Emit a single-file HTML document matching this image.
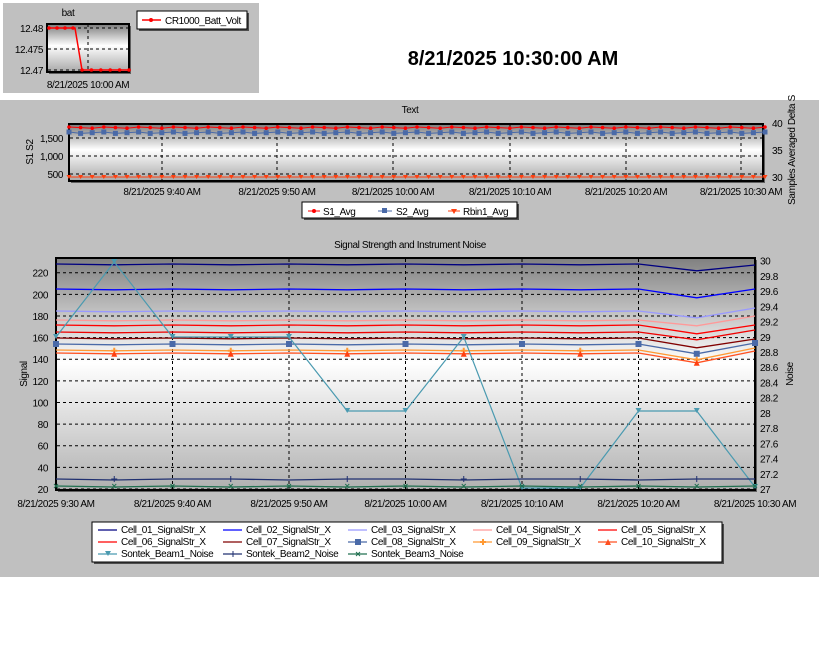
<!DOCTYPE html>
<html><head><meta charset="utf-8"><style>
html,body{margin:0;padding:0;background:#fff;width:821px;height:657px;overflow:hidden}
svg{display:block;font-family:"Liberation Sans",sans-serif}
svg text{letter-spacing:-0.4px}
svg text.big{letter-spacing:0}
</style></head><body>
<svg id="s" width="821" height="657" xmlns="http://www.w3.org/2000/svg">
<defs>
<linearGradient id="g1" x1="0" y1="0" x2="0" y2="1">
<stop offset="0" stop-color="#7a7a7a"/><stop offset="0.45" stop-color="#ffffff"/><stop offset="1" stop-color="#a8a8a8"/></linearGradient>
<linearGradient id="g2" x1="0" y1="0" x2="0" y2="1">
<stop offset="0" stop-color="#808080"/><stop offset="0.45" stop-color="#ffffff"/><stop offset="1" stop-color="#b0b0b0"/></linearGradient>
</defs>
<rect x="3" y="3" width="256" height="90" fill="#c0c0c0"/>
<text x="68" y="16" font-size="10" text-anchor="middle">bat</text>
<rect x="49" y="26" width="82" height="48" fill="#000" opacity="0.5"/>
<rect x="47" y="24" width="82" height="48" fill="url(#g1)" stroke="#000" stroke-width="2"/>
<g stroke="#000" stroke-dasharray="3,3" stroke-width="1">
<line x1="48" y1="28" x2="129" y2="28"/><line x1="48" y1="49" x2="129" y2="49"/><line x1="48" y1="70" x2="129" y2="70"/><line x1="88" y1="24" x2="88" y2="72"/></g>
<g font-size="10" text-anchor="end"><text x="43" y="32">12.48</text><text x="43" y="53">12.475</text><text x="43" y="74">12.47</text></g>
<text x="88" y="88" font-size="10" text-anchor="middle">8/21/2025 10:00 AM</text>
<polyline fill="none" stroke="#f00" stroke-width="1.5" points="48,28 75,28 82,70 129,70"/>
<g id="bm" fill="#f00"></g>
<rect x="139" y="13" width="110" height="18" fill="#000" opacity="0.6"/>
<rect x="137" y="11" width="110" height="18" fill="#fff" stroke="#000"/>
<line x1="142" y1="20" x2="161" y2="20" stroke="#f00" stroke-width="1.5"/><circle cx="151" cy="20" r="2" fill="#f00"/>
<text x="165" y="24" font-size="10">CR1000_Batt_Volt</text>
<text class="big" x="513" y="65" font-size="20" font-weight="bold" text-anchor="middle">8/21/2025 10:30:00 AM</text>

<rect x="0" y="100" width="819" height="477" fill="#c0c0c0"/>
<text x="410" y="113" font-size="10" text-anchor="middle">Text</text>
<rect x="71" y="126" width="694" height="57" fill="#000" opacity="0.5"/>
<rect x="69" y="124" width="694" height="57" fill="url(#g1)" stroke="#000" stroke-width="2"/>
<g id="tg" stroke="#000" stroke-dasharray="3,3"></g>
<g font-size="10" text-anchor="end"><text x="63" y="142">1,500</text><text x="63" y="160">1,000</text><text x="63" y="178">500</text></g>
<text transform="translate(33,152) rotate(-90)" font-size="10" text-anchor="middle">S1  S2</text>
<g font-size="10"><text x="772" y="127">40</text><text x="772" y="154">35</text><text x="772" y="181">30</text></g>
<text transform="translate(795,150) rotate(-90)" font-size="10" text-anchor="middle">Samples Averaged  Delta S</text>
<g id="tl" font-size="10" text-anchor="middle"></g>
<g id="tp"></g>
<rect x="304" y="204" width="215" height="16" fill="#000" opacity="0.6"/>
<rect x="302" y="202" width="215" height="16" fill="#fff" stroke="#000"/>
<line x1="308" y1="211" x2="320" y2="211" stroke="#f00"/><circle cx="314" cy="211" r="2" fill="#f00"/><text x="323" y="215" font-size="10">S1_Avg</text>
<line x1="378" y1="211" x2="392" y2="211" stroke="#4a6aa8"/><rect x="382" y="208" width="5" height="5" fill="#4a6aa8"/><text x="396" y="215" font-size="10">S2_Avg</text>
<line x1="448" y1="211" x2="460" y2="211" stroke="#ff4010"/><path d="M451 209h6l-3 5z" fill="#ff4010"/><text x="463" y="215" font-size="10">Rbin1_Avg</text>

<text x="410" y="248" font-size="10" text-anchor="middle">Signal Strength and Instrument Noise</text>
<rect x="58" y="260" width="699" height="232" fill="#000" opacity="0.5"/>
<rect x="56" y="258" width="699" height="232" fill="url(#g2)" stroke="#000" stroke-width="2"/>
<g id="sg" stroke="#000" stroke-dasharray="3,3"></g>
<g id="sl" font-size="10"></g>
<text transform="translate(27,374) rotate(-90)" font-size="10" text-anchor="middle">Signal</text>
<text transform="translate(793,374) rotate(-90)" font-size="10" text-anchor="middle">Noise</text>
<g id="sp"></g>
<rect x="94" y="524" width="630" height="40" fill="#000" opacity="0.6"/>
<rect x="92" y="522" width="630" height="40" fill="#fff" stroke="#000"/>
<g font-size="10">
<text x="121" y="533">Cell_01_SignalStr_X</text><text x="246" y="533">Cell_02_SignalStr_X</text><text x="371" y="533">Cell_03_SignalStr_X</text><text x="496" y="533">Cell_04_SignalStr_X</text><text x="621" y="533">Cell_05_SignalStr_X</text>
<text x="121" y="545">Cell_06_SignalStr_X</text><text x="246" y="545">Cell_07_SignalStr_X</text><text x="371" y="545">Cell_08_SignalStr_X</text><text x="496" y="545">Cell_09_SignalStr_X</text><text x="621" y="545">Cell_10_SignalStr_X</text>
<text x="121" y="557">Sontek_Beam1_Noise</text><text x="246" y="557">Sontek_Beam2_Noise</text><text x="371" y="557">Sontek_Beam3_Noise</text></g>
<g id="lg"></g>
</svg>
<script>
var NS="http://www.w3.org/2000/svg";
function el(p,t,a,txt){var e=document.createElementNS(NS,t);for(var k in a)e.setAttribute(k,a[k]);if(txt)e.textContent=txt;document.getElementById(p).appendChild(e);return e;}
for(var i=0;i<4;i++)el("bm","circle",{cx:49+i*8,cy:28,r:1.8});
for(var i=0;i<6;i++)el("bm","circle",{cx:82+i*9.4,cy:70,r:1.8});
[138,156,174].forEach(function(y){el("tg","line",{x1:70,y1:y,x2:762,y2:y});});
var tx=[162,277,393,510,626,741],tn=["9:40","9:50","10:00","10:10","10:20","10:30"];
tx.forEach(function(x,i){el("tg","line",{x1:x,y1:125,x2:x,y2:180});el("tl","text",{x:x,y:195},"8/21/2025 "+tn[i]+" AM");});
var p1=[],p2=[],p3=[];
for(var i=0;i<61;i++){var x=69+i*11.6;var y1=127+((i*7)%3)*0.6,y2=132+((i*5)%3)*0.7;p1.push(x+","+y1);p2.push(x+","+y2);p3.push(x+",177");
el("tp","circle",{cx:x,cy:y1,r:1.8,fill:"#f00"});el("tp","rect",{x:x-2.5,y:y2-2.5,width:5,height:5,fill:"#4a6aa8"});el("tp","path",{d:"M"+(x-2.5)+" 175h5l-2.5 4z",fill:"#ff4010"});}
el("tp","polyline",{points:p2.join(" "),fill:"none",stroke:"#4a6aa8"});
el("tp","polyline",{points:p1.join(" "),fill:"none",stroke:"#f00"});
el("tp","polyline",{points:p3.join(" "),fill:"none",stroke:"#ff4010"});
for(var v=20;v<=220;v+=20){var y=489-(v-20)*1.0815;el("sg","line",{x1:57,y1:y,x2:754,y2:y});el("sl","text",{x:48,y:y+4,"text-anchor":"end"},String(v));}
for(var n=0;n<=15;n++){var val=27+n*0.2;var y=489-n*0.2*76.1;el("sl","text",{x:760,y:y+4},(Math.round(val*10)/10).toString());}
var X=[];for(var k=0;k<13;k++)X.push(56+k*58.25);
var names=["9:30","9:40","9:50","10:00","10:10","10:20","10:30"];
for(var k=0;k<7;k++){var x=56+k*116.5;el("sg","line",{x1:x,y1:259,x2:x,y2:489});el("sl","text",{x:x,y:507,"text-anchor":"middle"},"8/21/2025 "+names[k]+" AM");}
function ser(c,base,dip,end,w){var pts=[];for(var k=0;k<13;k++){var y=base+(k==11?dip:0)+(k==12?end:0)+((k*3)%2?0.8:0);pts.push([X[k],y]);}el("sp","polyline",{points:pts.map(function(p){return p.join(",")}).join(" "),fill:"none",stroke:c,"stroke-width":w||1.3});return pts;}
ser("#000080",264,6,1);ser("#0000ff",289,8,0);ser("#9999ff",311,6,-3);ser("#ff9999",320,5,-4);ser("#ff0000",325,8,0);ser("#ee0000",332,7,-2);ser("#800000",338,9,1);
var p8=ser("#4a6aa8",344,9,-1);var p9=ser("#ff9933",350,9,-2);var p10=ser("#ff5020",353,9,-2);
p8.forEach(function(p,k){if(k%2==0||k==11)el("sp","rect",{x:p[0]-3,y:p[1]-3,width:6,height:6,fill:"#4a6aa8"});});
p9.forEach(function(p,k){if(k%2==1)el("sp","path",{d:"M"+(p[0]-3)+" "+p[1]+"h6M"+p[0]+" "+(p[1]-3)+"v6",stroke:"#ff9933","stroke-width":2});});
p10.forEach(function(p,k){if(k%2==1)el("sp","path",{d:"M"+(p[0]-3)+" "+(p[1]+3)+"h6l-3-6z",fill:"#ff4010"});});
var b1=[337,262,337,337,337,411,411,337,488,488,411,411,487];
el("sp","polyline",{points:X.map(function(x,k){return x+","+b1[k]}).join(" "),fill:"none",stroke:"#4a9ab0","stroke-width":1.2});
X.forEach(function(x,k){el("sp","path",{d:"M"+(x-3)+" "+(b1[k]-3)+"h6l-3 5z",fill:"#4a9ab0"});});
el("sp","polyline",{points:X.map(function(x,k){return x+","+(479+(k%3==1?1:0))}).join(" "),fill:"none",stroke:"#203070","stroke-width":1.3});
el("sp","polyline",{points:X.map(function(x,k){return x+","+(486+(k%2))}).join(" "),fill:"none",stroke:"#207050","stroke-width":1.3});
X.forEach(function(x,k){if(k%2){el("sp","path",{d:"M"+x+" 476v6M"+(x-3)+" 479h6",stroke:"#203070"});}el("sp","path",{d:"M"+(x-2)+" 484l4 4M"+(x+2)+" 484l-4 4",stroke:"#207050"});});
var cols=[["#000080","#0000ff","#9999ff","#ff9999","#ff0000"],["#ff0000","#800000","#4a6aa8","#ff9933","#ff5020"],["#4a9ab0","#203070","#207050"]];
cols.forEach(function(r,ri){r.forEach(function(c,ci){var x=98+ci*125,y=530+ri*12;el("lg","line",{x1:x,y1:y,x2:x+19,y2:y,stroke:c,"stroke-width":1.3});
var m=ri*5+ci;if(m==7)el("lg","rect",{x:x+7,y:y-3,width:6,height:6,fill:c});if(m==8)el("lg","path",{d:"M"+(x+7)+" "+y+"h6M"+(x+10)+" "+(y-3)+"v6",stroke:c,"stroke-width":2});if(m==9)el("lg","path",{d:"M"+(x+7)+" "+(y+3)+"h6l-3-6z",fill:c});if(m==10)el("lg","path",{d:"M"+(x+7)+" "+(y-3)+"h6l-3 5z",fill:c});if(m==11)el("lg","path",{d:"M"+(x+10)+" "+(y-3)+"v6",stroke:c});if(m==12)el("lg","path",{d:"M"+(x+8)+" "+(y-2)+"l4 4M"+(x+12)+" "+(y-2)+"l-4 4",stroke:c});});});
</script>
</body></html>
